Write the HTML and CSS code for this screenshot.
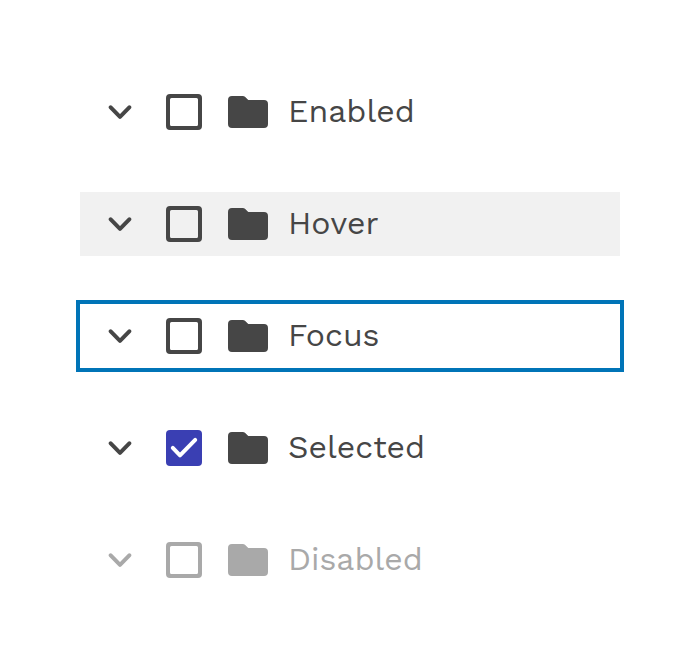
FILE: index.html
```html
<!DOCTYPE html>
<html lang="en">
<head>
<meta charset="utf-8">
<title>Tree item states</title>
<link rel="stylesheet" href="styles.css">
</head>
<body>
<svg class="defs" aria-hidden="true">
<symbol id="chevron" viewBox="0 0 24 16"><path d="M2.7 3.3 12 12.8 21.3 3.3" fill="none" stroke="currentColor" stroke-width="4" stroke-linecap="round" stroke-linejoin="round"/></symbol>
<symbol id="box" viewBox="0 0 36 36"><path fill-rule="evenodd" d="M4 0H32A4 4 0 0 1 36 4V32A4 4 0 0 1 32 36H4A4 4 0 0 1 0 32V4A4 4 0 0 1 4 0ZM5.5 4A1.5 1.5 0 0 0 4 5.5V30.5A1.5 1.5 0 0 0 5.5 32H30.5A1.5 1.5 0 0 0 32 30.5V5.5A1.5 1.5 0 0 0 30.5 4Z" fill="currentColor"/></symbol>
<symbol id="folder" viewBox="0 0 40 32"><path d="M4 0H14.5Q16.3 0 17.5 1.2L20.3 4H36A4 4 0 0 1 40 8V28A4 4 0 0 1 36 32H4A4 4 0 0 1 0 28V4A4 4 0 0 1 4 0Z" fill="currentColor"/></symbol>
</svg>
<ul class="tree">
<li class="item"><svg class="chevron"><use href="#chevron"/></svg><svg class="box"><use href="#box"/></svg><svg class="folder"><use href="#folder"/></svg><span class="label">Enabled</span></li>
<li class="item hover"><svg class="chevron"><use href="#chevron"/></svg><svg class="box"><use href="#box"/></svg><svg class="folder"><use href="#folder"/></svg><span class="label">Hover</span></li>
<li class="item focus"><svg class="chevron"><use href="#chevron"/></svg><svg class="box"><use href="#box"/></svg><svg class="folder"><use href="#folder"/></svg><span class="label">Focus</span></li>
<li class="item"><svg class="chevron"><use href="#chevron"/></svg><svg class="box checked" viewBox="0 0 36 36"><path d="M6.8 17.9 14 25.3 29.2 9.9" fill="none" stroke="currentColor" stroke-width="4" stroke-linecap="round" stroke-linejoin="round"/></svg><svg class="folder"><use href="#folder"/></svg><span class="label">Selected</span></li>
<li class="item disabled"><svg class="chevron"><use href="#chevron"/></svg><svg class="box"><use href="#box"/></svg><svg class="folder"><use href="#folder"/></svg><span class="label">Disabled</span></li>
</ul>
</body>
</html>
```
FILE: styles.css
```css
body { margin: 0; background: #fff; }
.defs { display: none; }
.tree { list-style: none; margin: 0; padding: 80px; display: flex; flex-direction: column; gap: 48px; }
.item { height: 64px; display: flex; align-items: center; padding-left: 28px; box-sizing: border-box; color: #464646; }
.hover { background: #f1f1f1; }
.focus { box-shadow: 0 0 0 4px #0074b7; }
.disabled { color: #a9a9a9; }
.chevron { width: 24px; height: 16px; margin-right: 34px; }
.box { width: 36px; height: 36px; margin-right: 26px; }
.checked { border-radius: 4px; background: #3a3fb3; color: #fff; }
.folder { width: 40px; height: 32px; margin-right: 20px; }
.label { font: 32px/40px "Work Sans", "Open Sans", sans-serif; white-space: nowrap; padding-bottom: 2px; }
```
